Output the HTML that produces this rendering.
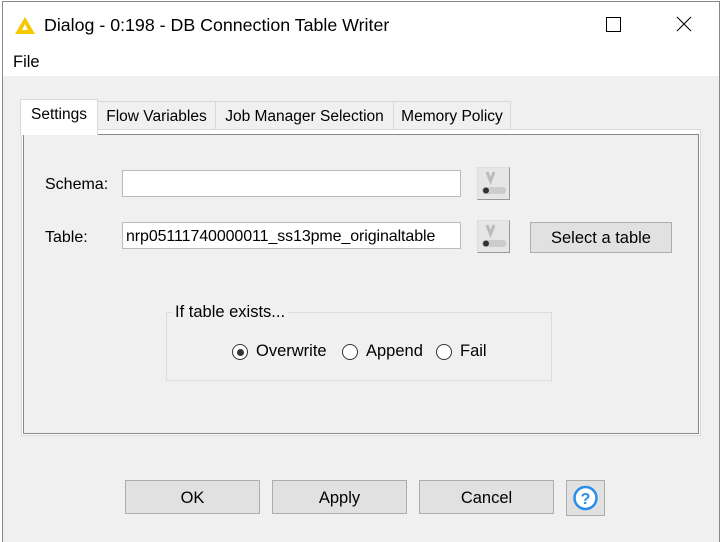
<!DOCTYPE html>
<html><head><style>
body{margin:0;width:724px;height:537px;background:#fff;position:relative;overflow:hidden;font-family:"Liberation Sans",sans-serif;font-size:16px;color:#000}
.a{position:absolute}
.win{left:2px;top:1px;width:716px;height:540px;border:1px solid #888;border-bottom:none;background:#f0f0f0}
.tb{left:0;top:0;width:716px;height:74px;background:#fff}
.tab{top:101px;height:27px;border:1px solid #d9d9d9;border-bottom:none;background:#f0f0f0;line-height:29px;text-align:center;font-size:15.5px}
.inp{background:#fff;border:1px solid #bbb;height:27px;box-sizing:border-box;line-height:27px;padding-left:3px;font-size:16px}
.vb{width:33px;height:33px;box-sizing:border-box;border:1px solid #999;border-top-color:#ddd;border-left-color:#ddd;background:#e6e6e6}
.btn{background:#e1e1e1;border:1px solid #adadad;box-sizing:border-box;text-align:center;font-size:16.5px}
.rad{width:16px;height:16px;border:1px solid #333;border-radius:50%;box-sizing:border-box;background:#fff;top:344px}
</style></head><body>
<div class="a win">
<div class="a tb"></div>
</div>
<svg class="a" style="left:14px;top:16px" width="22" height="20"><polygon points="1,18 11,1 21,18" fill="#f5c800"/><polygon points="8,14 11,8 14,14" fill="#fff"/></svg>
<div class="a" style="left:44px;top:15px;font-size:17.8px">Dialog - 0:198 - DB Connection Table Writer</div>
<div class="a" style="left:606px;top:17px;width:13px;height:13px;border:1px solid #000"></div>
<svg class="a" style="left:676px;top:16px" width="16" height="16"><path d="M1 1L15 15M15 1L1 15" stroke="#000" stroke-width="1.1"/></svg>
<div class="a" style="left:13px;top:53px;font-size:16.5px">File</div>

<div class="a" style="left:21px;top:129px;width:680px;height:307px;border:1px solid #d9d9d9;background:#fff;box-sizing:border-box"></div>
<div class="a" style="left:23px;top:134px;width:676px;height:300px;border:1px solid #888;background:#f0f0f0;box-sizing:border-box"></div>
<div class="a tab" style="left:97px;width:117px">Flow Variables</div>
<div class="a tab" style="left:215px;width:177px">Job Manager Selection</div>
<div class="a tab" style="left:393px;width:116px">Memory Policy</div>
<div class="a tab" style="left:20px;top:99px;height:35px;line-height:29px;width:76px;background:#fff">Settings</div>

<div class="a" style="left:45px;top:176px">Schema:</div>
<div class="a inp" style="left:122px;top:170px;width:339px"></div>
<div class="a" style="left:45px;top:229px">Table:</div>
<div class="a inp" style="left:122px;top:222px;width:339px;letter-spacing:-0.1px">nrp05111740000011_ss13pme_originaltable</div>
<div class="a vb" style="left:477px;top:167px"><svg width="31" height="31"><path d="M9 4L12.5 13L16 4" stroke="#bbb" stroke-width="3" fill="none"/><rect x="4" y="19" width="24" height="7" rx="3" fill="#ccc"/><circle cx="8" cy="22.5" r="3" fill="#333"/></svg></div>
<div class="a vb" style="left:477px;top:220px"><svg width="31" height="31"><path d="M9 4L12.5 13L16 4" stroke="#bbb" stroke-width="3" fill="none"/><rect x="4" y="19" width="24" height="7" rx="3" fill="#ccc"/><circle cx="8" cy="22.5" r="3" fill="#333"/></svg></div>
<div class="a btn" style="left:530px;top:222px;width:142px;height:31px;line-height:30px">Select a table</div>

<div class="a" style="left:166px;top:312px;width:386px;height:69px;border:1px solid #dcdcdc;box-sizing:border-box"></div>
<div class="a" style="left:172px;top:303px;background:#f0f0f0;padding:0 3px;font-size:16.5px">If table exists...</div>
<div class="a rad" style="left:232px"><div class="a" style="left:3.5px;top:3.5px;width:7px;height:7px;border-radius:50%;background:#333"></div></div>
<div class="a" style="left:256px;top:342px;font-size:16.5px">Overwrite</div>
<div class="a rad" style="left:342px"></div>
<div class="a" style="left:366px;top:342px;font-size:16.5px">Append</div>
<div class="a rad" style="left:436px"></div>
<div class="a" style="left:460px;top:342px;font-size:16.5px">Fail</div>

<div class="a btn" style="left:125px;top:480px;width:135px;height:34px;line-height:35px">OK</div>
<div class="a btn" style="left:272px;top:480px;width:135px;height:34px;line-height:35px">Apply</div>
<div class="a btn" style="left:419px;top:480px;width:135px;height:34px;line-height:35px">Cancel</div>
<div class="a btn" style="left:566px;top:480px;width:39px;height:36px"><svg width="37" height="34"><circle cx="18.5" cy="17" r="11" fill="#fff" stroke="#2a8de8" stroke-width="2.5"/><text x="18.5" y="23" text-anchor="middle" font-family="Liberation Sans" font-weight="bold" font-size="16" fill="#2a8de8">?</text></svg></div>
</body></html>
